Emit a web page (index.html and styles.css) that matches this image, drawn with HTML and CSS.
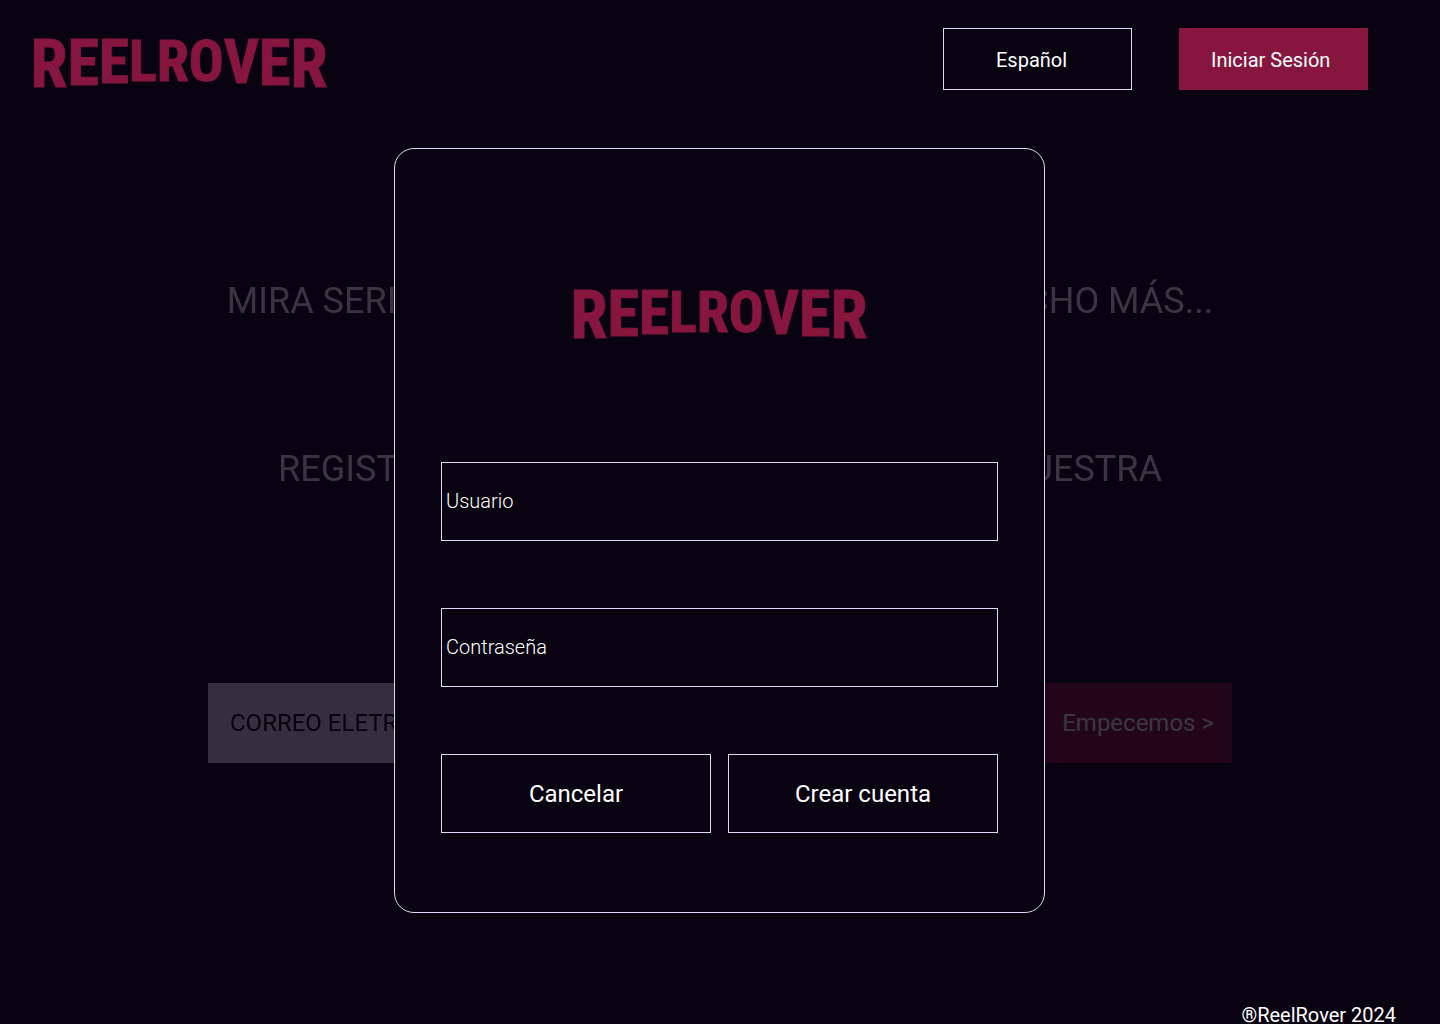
FILE: index.html
```html
<!DOCTYPE html>
<html lang="es">
<head>
  <meta charset="utf-8">
  <meta name="viewport" content="width=device-width, initial-scale=1">
  <title>ReelRover</title>
  <link rel="stylesheet" href="styles.css">
</head>
<body>
  <header class="header">
    <a class="logo-link" href="#">
      <svg class="logo" viewBox="0 0 294 66" role="img" aria-label="ReelRover">
        <text class="wordmark" x="146" y="59" text-anchor="middle"><tspan font-size="67">R</tspan><tspan font-size="64" dy="-2">E</tspan><tspan font-size="61" dy="-2">E</tspan><tspan font-size="58" dy="-2">L</tspan><tspan font-size="58">R</tspan><tspan font-size="58">O</tspan><tspan font-size="61" dy="2">V</tspan><tspan font-size="64" dy="2">E</tspan><tspan font-size="67" dy="2">R</tspan></text>
      </svg>
    </a>
    <nav class="nav">
      <select class="language" aria-label="Idioma">
        <option>Español</option>
      </select>
      <button class="login" type="button">Iniciar Sesión</button>
    </nav>
  </header>

  <main class="stage">
    <section class="hero">
      <h1 class="hero-line">MIRA SERIES, PELICULAS, DOCUMENTALES Y MUCHO MÁS...</h1>
      <p class="hero-line">REGISTRATE, CON TU CORREO, Y DESCUBRE NUESTRA</p>
      <form class="signup">
        <input class="signup-email" type="email" placeholder="CORREO ELETRONICO" aria-label="Correo">
        <button class="signup-button" type="button">Empecemos &gt;</button>
      </form>
    </section>

    <form class="modal">
      <svg class="logo modal-logo" viewBox="0 0 294 66" role="img" aria-label="ReelRover">
        <text class="wordmark" x="146" y="59" text-anchor="middle"><tspan font-size="67">R</tspan><tspan font-size="64" dy="-2">E</tspan><tspan font-size="61" dy="-2">E</tspan><tspan font-size="58" dy="-2">L</tspan><tspan font-size="58">R</tspan><tspan font-size="58">O</tspan><tspan font-size="61" dy="2">V</tspan><tspan font-size="64" dy="2">E</tspan><tspan font-size="67" dy="2">R</tspan></text>
      </svg>
      <input class="field" type="text" placeholder="Usuario" aria-label="Usuario">
      <input class="field" type="password" placeholder="Contraseña" aria-label="Contraseña">
      <div class="actions">
        <button class="action" type="button">Cancelar</button>
        <button class="action" type="button">Crear cuenta</button>
      </div>
    </form>
  </main>

  <footer class="footer">®ReelRover 2024</footer>
</body>
</html>
```
FILE: styles.css
```css
* {
  box-sizing: border-box;
}

:root {
  --night: #090211;
  --wine: #87163f;
  --line: #e0d8fb;
}

body {
  display: flex;
  flex-direction: column;
  min-height: 100vh;
  margin: 0;
  background: var(--night);
  color: #fff;
  font-family: Roboto, sans-serif;
  font-size: 20px;
}

button,
input,
select {
  margin: 0;
  border-radius: 0;
  color: inherit;
  font: inherit;
}

.header {
  display: flex;
  justify-content: space-between;
  align-items: flex-start;
  padding: 28px 72px 28px 33px;
}

.logo-link {
  display: block;
  height: 62px;
}

.logo {
  display: block;
  width: 294px;
  height: 66px;
  overflow: visible;
}

.wordmark {
  fill: var(--wine);
  stroke: var(--wine);
  stroke-width: 1px;
  font-family: "Roboto Condensed", "Liberation Sans Narrow", Roboto, sans-serif;
  font-weight: 700;
}

.nav {
  display: flex;
  gap: 47px;
}

.language,
.login {
  width: 189px;
  height: 62px;
}

.language {
  appearance: none;
  padding: 2px 52px 0;
  border: 1px solid var(--line);
  background: transparent;
}

.login {
  padding: 2px 32px 0;
  border: 0;
  background: var(--wine);
  text-align: left;
}

.stage {
  display: grid;
  justify-items: center;
  align-items: start;
}

/* The dialog shares one grid cell with the dimmed landing content. */
.hero,
.modal {
  grid-area: 1 / 1;
}

.hero {
  display: flex;
  flex-direction: column;
  align-items: center;
  width: 100%;
  max-width: 1024px;
  padding-top: 162px;
  opacity: 0.2;
}

.hero-line {
  margin: 0 0 126px;
  font-size: 36px;
  font-weight: 400;
  line-height: 42px;
  white-space: nowrap;
}

.signup {
  display: flex;
  width: 100%;
  height: 80px;
  margin-top: 67px;
  font-size: 24px;
}

.signup-email {
  flex: 1;
  min-width: 0;
  padding: 0 22px;
  border: 0;
  background: #efdeee;
}

.signup-email::placeholder {
  color: #000;
  opacity: 1;
}

.signup-button {
  padding: 0 18px;
  border: 0;
  background: var(--wine);
}

.modal {
  z-index: 1;
  display: flex;
  flex-direction: column;
  gap: 67px;
  width: 100%;
  max-width: 651px;
  margin-top: 30px;
  margin-right: 1px;
  padding: 130px 46px 79px;
  border: 1px solid var(--line);
  border-radius: 20px;
  background: var(--night);
}

.modal-logo {
  align-self: center;
  margin-bottom: 50px;
}

.field {
  height: 79px;
  padding: 0 4px 2px;
  border: 1px solid var(--line);
  background: transparent;
  font-weight: 300;
}

.field::placeholder {
  color: #fff;
  opacity: 1;
}

.actions {
  display: flex;
  gap: 17px;
}

.action {
  flex: 1;
  height: 79px;
  border: 1px solid var(--line);
  background: transparent;
  font-size: 24px;
}

.footer {
  margin-top: auto;
  padding: 0 44px 0 0;
  line-height: 18px;
  text-align: right;
}
```
